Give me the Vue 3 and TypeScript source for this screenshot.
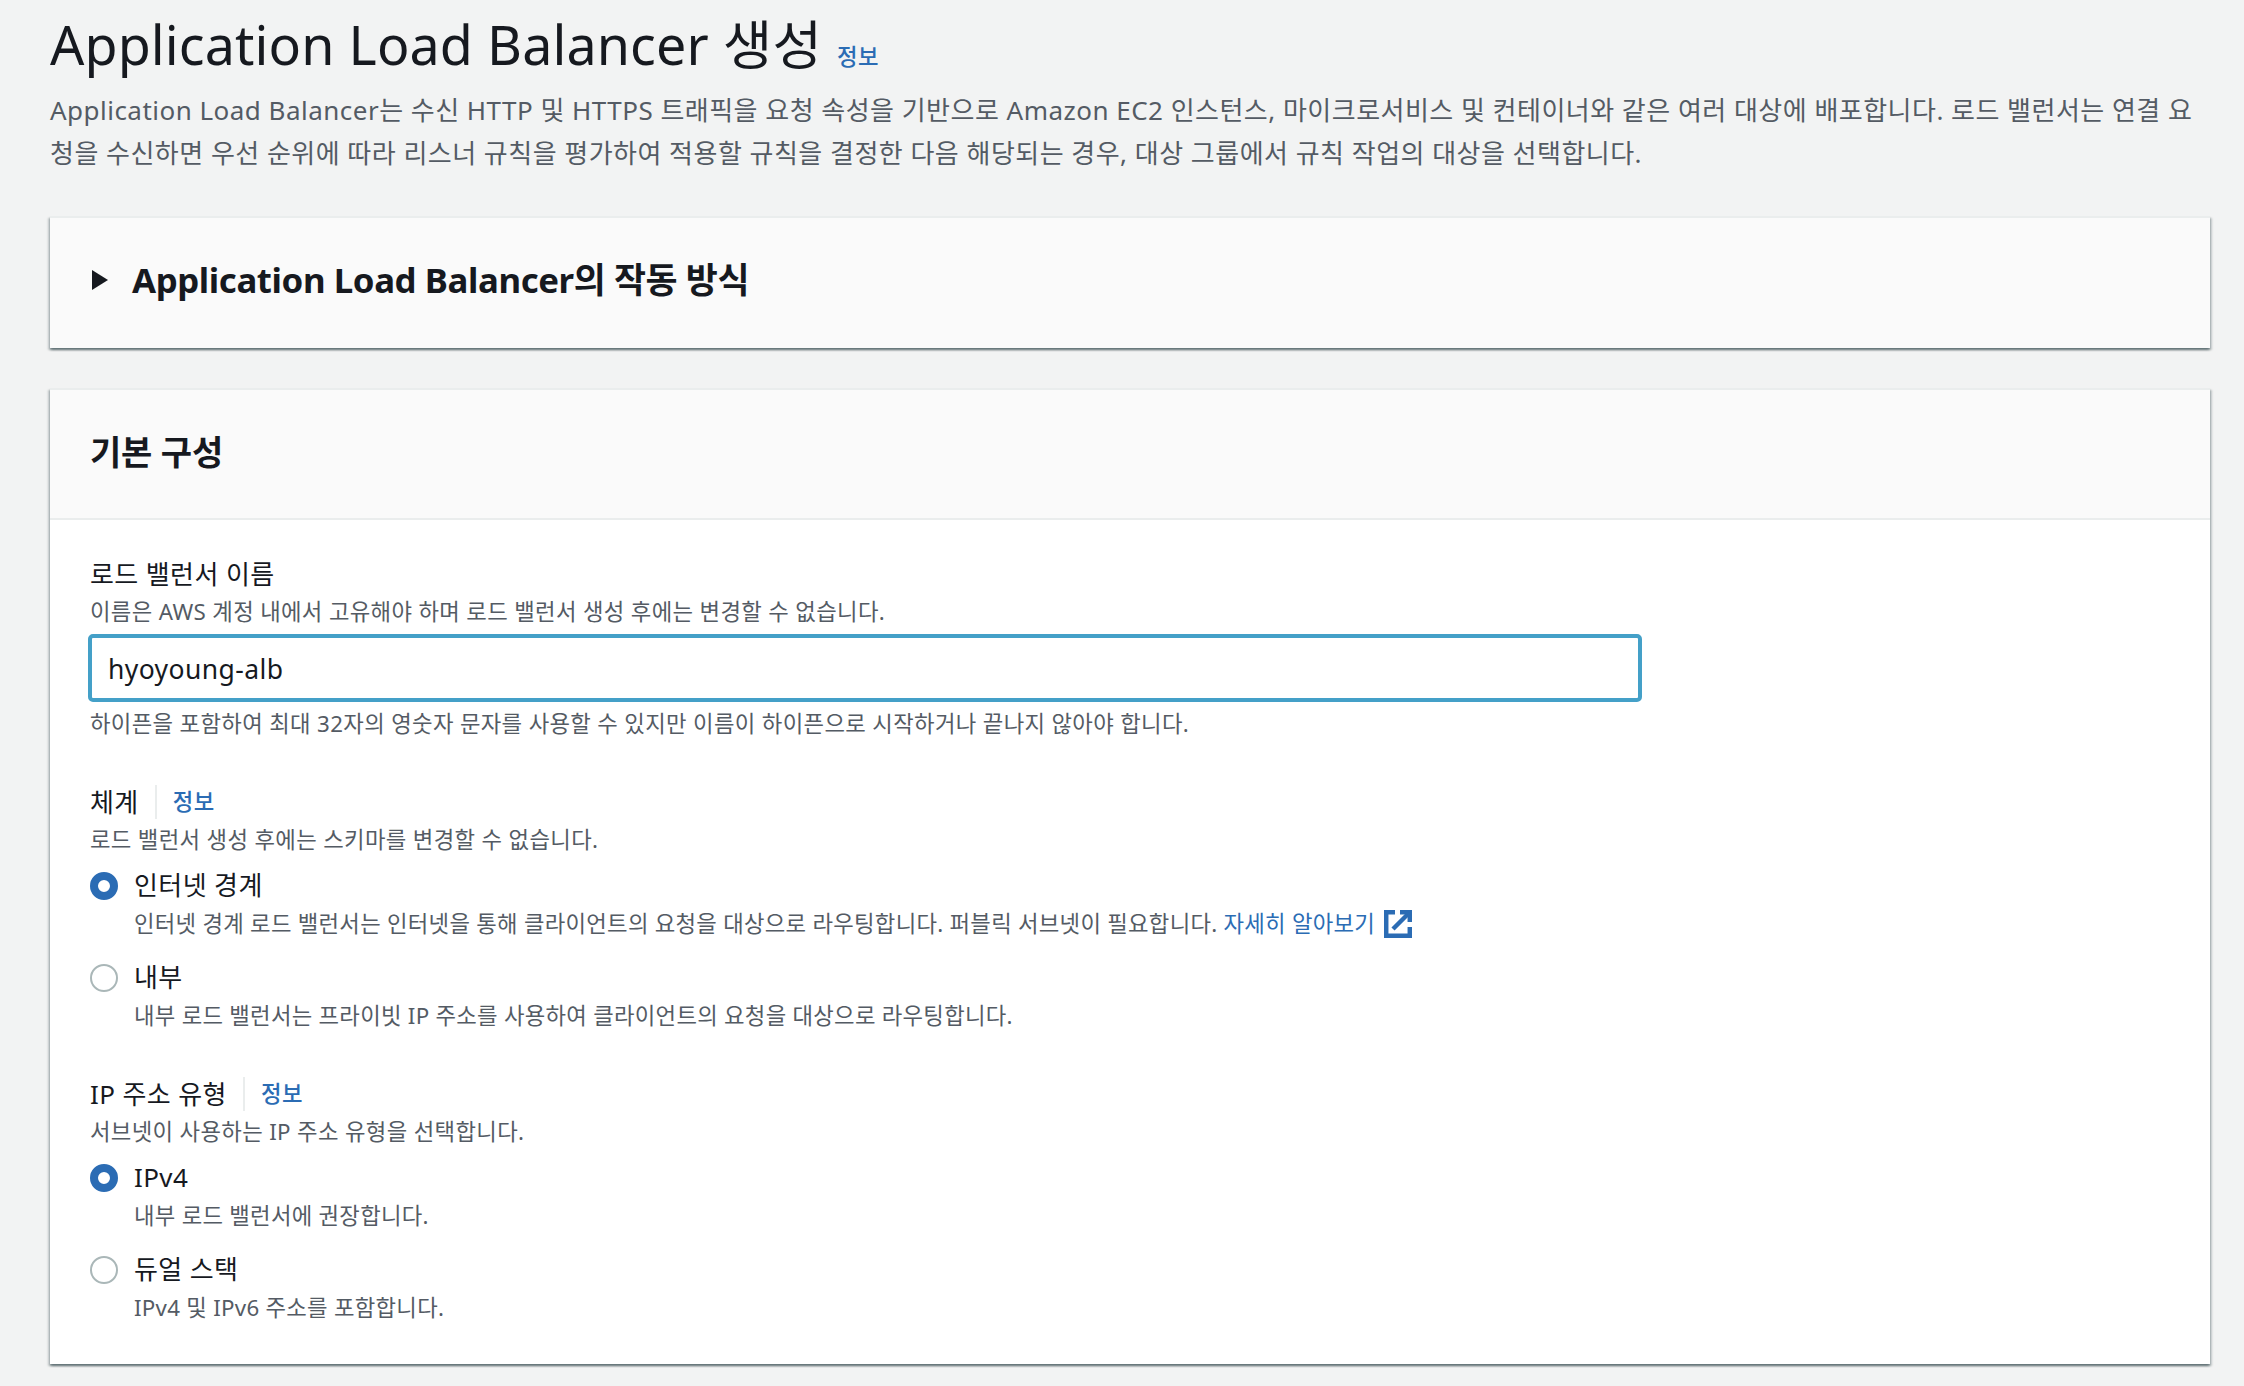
<script setup lang="ts">
interface RadioOption {
  label: string
  description: string
  checked: boolean
  link?: string
}

const schemeOptions: RadioOption[] = [
  {
    label: '인터넷 경계',
    description: '인터넷 경계 로드 밸런서는 인터넷을 통해 클라이언트의 요청을 대상으로 라우팅합니다. 퍼블릭 서브넷이 필요합니다.',
    checked: true,
    link: '자세히 알아보기',
  },
  {
    label: '내부',
    description: '내부 로드 밸런서는 프라이빗 IP 주소를 사용하여 클라이언트의 요청을 대상으로 라우팅합니다.',
    checked: false,
  },
]

const ipOptions: RadioOption[] = [
  { label: 'IPv4', description: '내부 로드 밸런서에 권장합니다.', checked: true },
  { label: '듀얼 스택', description: 'IPv4 및 IPv6 주소를 포함합니다.', checked: false },
]

const groups = [
  { title: '체계', hint: '로드 밸런서 생성 후에는 스키마를 변경할 수 없습니다.', options: schemeOptions },
  { title: 'IP 주소 유형', hint: '서브넷이 사용하는 IP 주소 유형을 선택합니다.', options: ipOptions },
]
</script>

<template>
  <main class="page">
    <header class="head">
      <h1 class="title">Application Load Balancer 생성 <a class="info">정보</a></h1>
      <p class="lead">Application Load Balancer는 수신 HTTP 및 HTTPS 트래픽을 요청 속성을 기반으로 Amazon EC2 인스턴스, 마이크로서비스 및 컨테이너와 같은 여러 대상에 배포합니다. 로드 밸런서는 연결 요청을 수신하면 우선 순위에 따라 리스너 규칙을 평가하여 적용할 규칙을 결정한 다음 해당되는 경우, 대상 그룹에서 규칙 작업의 대상을 선택합니다.</p>
    </header>

    <section class="card how">
      <svg class="caret" width="16" height="20" viewBox="0 0 16 20"><path d="M0 0 L16 10 L0 20 Z" fill="#16191f" /></svg>
      <h2 class="how-title">Application Load Balancer의 작동 방식</h2>
    </section>

    <section class="card">
      <div class="card-head"><h2 class="card-title">기본 구성</h2></div>
      <div class="card-body">
        <div class="field">
          <div class="label">로드 밸런서 이름</div>
          <div class="hint">이름은 AWS 계정 내에서 고유해야 하며 로드 밸런서 생성 후에는 변경할 수 없습니다.</div>
          <div class="input">hyoyoung-alb</div>
          <div class="hint after">하이픈을 포함하여 최대 32자의 영숫자 문자를 사용할 수 있지만 이름이 하이픈으로 시작하거나 끝나지 않아야 합니다.</div>
        </div>

        <div v-for="group in groups" :key="group.title" class="group">
          <div class="label-row">
            <span class="label">{{ group.title }}</span>
            <a class="info small">정보</a>
          </div>
          <div class="hint">{{ group.hint }}</div>
          <div v-for="option in group.options" :key="option.label" class="radio">
            <span class="dot" :class="{ on: option.checked }"></span>
            <div class="radio-text">
              <div class="radio-label">{{ option.label }}</div>
              <div class="hint">
                {{ option.description }}
                <a v-if="option.link" class="link">{{ option.link }}<svg class="ext" width="28" height="28" viewBox="0 0 28 28" fill="none" stroke="#2b6cb4" stroke-width="4.5"><path d="M11 2.2 H2.2 V25.8 H25.8 V17" /><path d="M9 19 L24 4" /><path d="M16 2.2 H25.8 V12" /></svg></a>
              </div>
            </div>
          </div>
        </div>
      </div>
    </section>
  </main>
</template>

<style>
html, body { margin: 0; background: #f2f3f3; }
</style>

<style scoped>
.page {
  box-sizing: border-box;
  width: 2244px;
  height: 1386px;
  overflow: hidden;
  padding: 0 34px 0 50px;
  background: #f2f3f3;
  font-family: "Noto Sans", "Noto Sans CJK KR", sans-serif;
  color: #16191f;
}
.head { height: 216px; }
.title { margin: 0; padding-top: 8px; font-size: 53.8px; line-height: 72px; font-weight: 400; color: #16191f; letter-spacing: 0.1px; }
.info { color: #2b6cb4; font-size: 22.3px; line-height: 30px; margin-left: 1px; font-weight: 500; letter-spacing: 0.5px; }
.lead { margin: 0; padding-top: 9px; font-size: 26px; line-height: 43px; color: #545b64; word-break: break-all; letter-spacing: 0.48px; }
.card {
  background: #fff;
  box-shadow: 0 2px 2px 0 rgba(0, 28, 36, 0.4), 2px 2px 2px 0 rgba(0, 28, 36, 0.18), -2px 2px 2px 0 rgba(0, 28, 36, 0.18);
  border-top: 2px solid #eaeded;
  box-sizing: border-box;
}
.how {
  height: 132px;
  margin-bottom: 40px;
  background: #fafafa;
  display: flex;
  align-items: center;
  padding: 0 0 6px 42px;
  gap: 24px;
}
.how-title { margin: 0; font-size: 34.8px; line-height: 46px; font-weight: 700; letter-spacing: -0.4px; }
.card-head {
  height: 130px;
  box-sizing: border-box;
  background: #fafafa;
  border-bottom: 2px solid #eaeded;
  padding: 0 0 8px 40px;
  display: flex;
  align-items: center;
}
.card-title { margin: 0; font-size: 34px; font-weight: 700; letter-spacing: -0.2px; }
.card-body { padding: 34px 40px 0; height: 844px; box-sizing: border-box; }
.label { font-size: 26px; line-height: 40px; letter-spacing: 0.4px; }
.hint { font-size: 22.3px; line-height: 36px; color: #545b64; letter-spacing: 0.35px; }
.after { margin-top: 4px; }
.input {
  box-sizing: border-box;
  width: 1554px;
  height: 68px;
  margin: 4px 0 0 -2px;
  border: 4px solid #44a0c8;
  border-radius: 5px;
  padding: 1px 0 0 16px;
  display: flex;
  align-items: center;
  font-size: 26.5px;
  letter-spacing: 0.4px;
  color: #16191f;
}
.group { margin-top: 42px; }
.label-row { display: flex; align-items: center; height: 36px; margin-bottom: 2px; }
.label-row .label { padding-right: 16px; border-right: 2px solid #eaeded; line-height: 34px; }
.small { margin-left: 16px; }
.radio { display: flex; gap: 16px; margin-top: 7px; }
.radio + .radio { margin-top: 15px; }
.dot {
  box-sizing: border-box;
  width: 28px;
  height: 28px;
  margin-top: 7px;
  border-radius: 50%;
  border: 2px solid #aab7b8;
  background: #fff;
  flex: none;
}
.dot.on { border: 8px solid #2b6cb4; }
.radio-label { font-size: 26px; line-height: 40px; letter-spacing: 0.4px; }
.radio-text .hint { display: flex; gap: 6px; align-items: center; line-height: 37px; letter-spacing: 0.28px; }
.link { color: #2b6cb4; display: inline-flex; align-items: center; gap: 9px; }
.ext { flex: none; }
</style>
